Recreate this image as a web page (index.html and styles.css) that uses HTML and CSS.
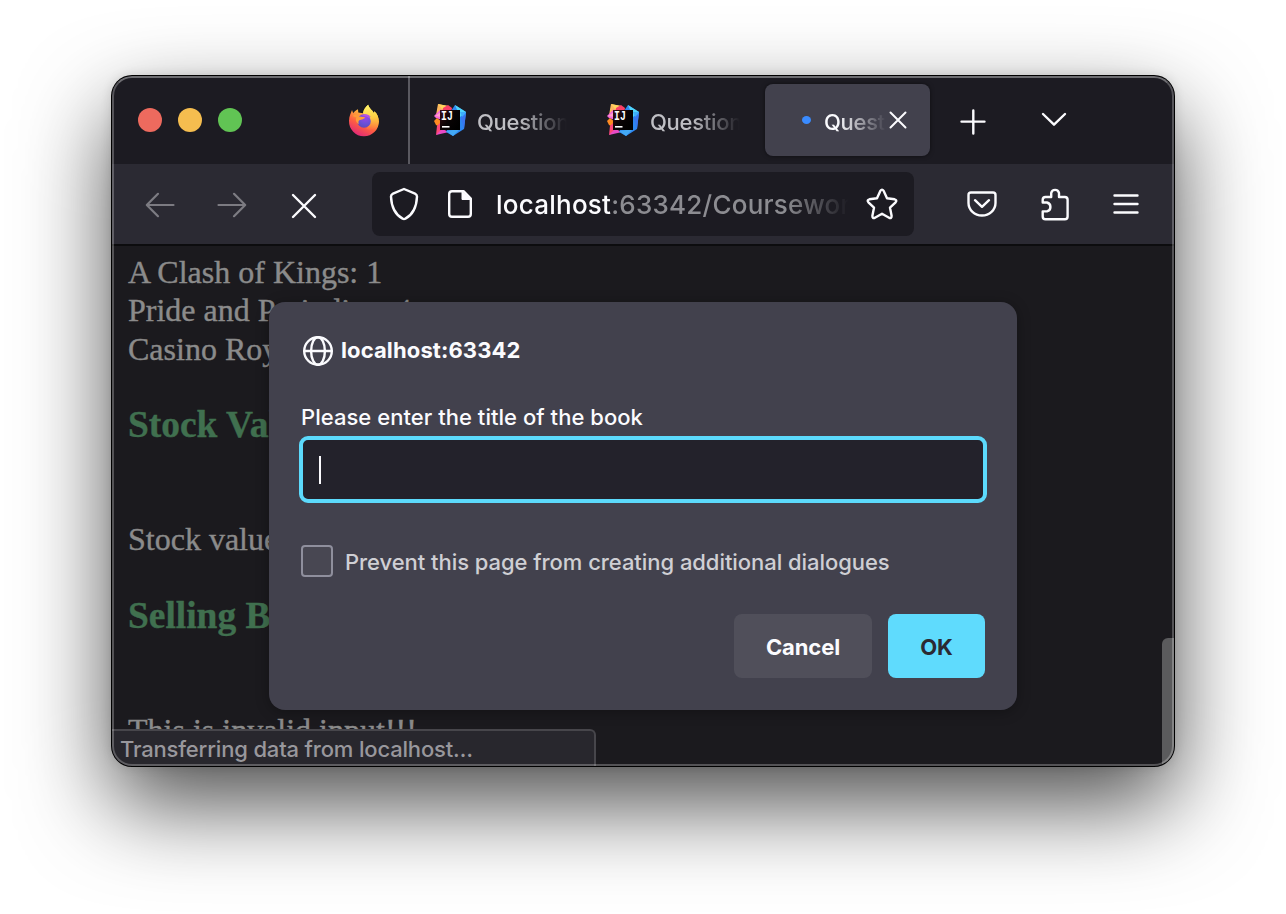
FILE: index.html
```html
<!DOCTYPE html>
<html lang="en">
<head>
<meta charset="utf-8">
<title>localhost:63342</title>
<link rel="stylesheet" href="styles.css">
</head>
<body>
<svg class="defs" width="0" height="0" aria-hidden="true">
  <defs>
    <linearGradient id="ff-body" x1=".8" y1="0" x2=".3" y2="1">
      <stop offset="0" stop-color="#fff04e"/><stop offset=".35" stop-color="#ffb33c"/><stop offset=".65" stop-color="#ff6040"/><stop offset="1" stop-color="#e0267a"/>
    </linearGradient>
    <linearGradient id="ff-flame" x1=".5" y1="0" x2=".6" y2="1">
      <stop offset="0" stop-color="#fff36a"/><stop offset=".5" stop-color="#ffd044"/><stop offset="1" stop-color="#ff8a3a" stop-opacity=".2"/>
    </linearGradient>
    <radialGradient id="ff-globe" cx=".6" cy=".2" r=".9">
      <stop offset="0" stop-color="#a044e8"/><stop offset=".55" stop-color="#6a50d8"/><stop offset="1" stop-color="#5b4ab4"/>
    </radialGradient>
    <linearGradient id="ij-black" x1="0" y1="0" x2="1" y2=".7">
      <stop offset="0" stop-color="#3a0d14"/><stop offset=".55" stop-color="#080304"/><stop offset="1" stop-color="#000"/>
    </linearGradient>
    <symbol id="ij" viewBox="0 0 32 32">
      <path d="M4 0L14 2 12 12 2 11Z" fill="#fdb75c"/>
      <path d="M4 0L14 2 9 6Z" fill="#ffd45e"/>
      <path d="M9 4L14 1 18 4 17 9 8 9Z" fill="#fb3f66"/>
      <path d="M0 12L7 5 8 16 2 14Z" fill="#f565dc"/>
      <path d="M1 12L7 8 7 13Z" fill="#ffa0c8"/>
      <path d="M0 17L3 14 8 18 6 23 2 21Z" fill="#ff8b22"/>
      <path d="M3 22L7 18 12 26 2 31Z" fill="#fd4778"/>
      <path d="M2 31L8 25 15 28Z" fill="#e84ac6"/>
      <path d="M17 7L21 1 32 8 30 25 19 32 12 28 15 23Z" fill="#2d86f0"/>
      <path d="M21 1L32 8 26 13Z" fill="#50d6fb"/>
      <path d="M26 8L32 8 30 17Z" fill="#3daefb"/>
      <path d="M27 14L32 9 30 25Z" fill="#3976ef"/>
      <path d="M12 27L26 25 19 32Z" fill="#43a9f5"/>
      <rect x="6" y="6" width="20" height="20" fill="url(#ij-black)"/>
      <text transform="translate(7 16.4) scale(.82 1)" class="ij-text">IJ</text>
      <rect x="8" y="22" width="7.5" height="1.6" fill="#fff"/>
    </symbol>
  </defs>
</svg>

<main class="window">
  <header class="tabstrip">
    <div class="lights"><i class="light red"></i><i class="light amber"></i><i class="light green"></i></div>
    <svg class="firefox" viewBox="0 0 32 33">
      <path d="M1 17C1 12 3 9 4 6L5.2 9.2C6.2 7.5 8 6 10 5.2L10.3 8.4 15 9.3C15.5 6 17.5 3 20.2.8C21 4.5 24 5.6 26 9.2L26.4 7.2C29.5 10 31 13.5 31 17.5A15 15 0 0 1 1 17Z" fill="url(#ff-body)"/>
      <path d="M15 9.3C15.5 6 17.5 3 20.2.8C21 4.5 24 5.6 26 9.2L26.4 7.2C29.5 10 31 14 30.3 19C28 25 23 27 18 25C23 21 22 13 15 9.3Z" fill="url(#ff-flame)"/>
      <circle cx="16" cy="17" r="6.8" fill="url(#ff-globe)"/>
      <path d="M4.5 12C8 9.5 10 10.2 11 12.4L17 13.2C16.6 15.2 13.5 15.2 11.3 16.3C10.2 17.2 10.4 18.5 10.8 20.2C7.5 18.2 7.3 14.6 8.6 13.4Z" fill="#ff9c38"/>
      <path d="M14 11.5C17 9.2 21 10.5 23 13.2L20.5 12.4 22 15C19.8 12.7 17.5 12 14 11.5Z" fill="#b653e6"/>
    </svg>
    <div class="divider"></div>
    <div class="tab"><svg class="ij"><use href="#ij"/></svg><span class="label">Question</span></div>
    <div class="tab"><svg class="ij"><use href="#ij"/></svg><span class="label">Question</span></div>
    <div class="tab active">
      <i class="busy"></i><span class="label">Questi</span>
      <svg class="close" viewBox="0 0 18 18"><path d="M1.5 1.5L16.5 16.5M16.5 1.5L1.5 16.5"/></svg>
    </div>
    <svg class="plus" viewBox="0 0 26 26"><path d="M13.3 1.5V24.5M1.5 12.6H24.5"/></svg>
    <svg class="chevron" viewBox="0 0 26 15"><path d="M2 2L13 12.7 24 2"/></svg>
  </header>

  <nav class="toolbar">
    <svg class="arrow" viewBox="0 0 30 26"><path d="M28.5 13H2M13 1.8L1.8 13 13 24.2"/></svg>
    <svg class="arrow forward" viewBox="0 0 30 26"><path d="M1.5 13H28M17 1.8L28.2 13 17 24.2"/></svg>
    <svg class="stop" viewBox="0 0 26 26"><path d="M2 2L24 24M24 2L2 24"/></svg>
    <div class="urlbar">
      <svg class="shield" viewBox="0 0 30 34"><path d="M15 2L26 6.6Q28 7.5 28 9.6C27.6 19 24 27.5 16.4 31.6Q15 32.3 13.6 31.6C6 27.5 2.4 19 2 9.6Q2 7.5 4 6.6Z"/></svg>
      <svg class="page-icon" viewBox="0 0 26 30"><path d="M5 2.2H16.5L23.8 9.5V25Q23.8 27.8 21 27.8H5Q2.2 27.8 2.2 25V5Q2.2 2.2 5 2.2Z"/><path class="fold" d="M15 2V10.5H24.5Z"/></svg>
      <span class="url"><b>localhost</b>:63342/Coursework</span>
      <svg class="star" viewBox="0 0 32 32"><path d="M14.3 2.9Q16 .4 17.7 2.9L21 10.3 28.6 11.3Q31.4 12 29.6 14.3L24 19.7 25.6 27.8Q25.8 30.7 23.1 29.8L16 25.8 8.9 29.8Q6.2 30.7 6.4 27.8L8 19.7 2.4 14.3Q.6 12 3.4 11.3L11 10.3Z"/></svg>
    </div>
    <svg class="pocket" viewBox="0 0 30 26"><path d="M4 1.5H26Q28.5 1.5 28.5 4V12A13.5 12.5 0 0 1 1.5 12V4Q1.5 1.5 4 1.5ZM8 9.2L15 15.8 22 9.2"/></svg>
    <svg class="puzzle" viewBox="0 0 28 34"><path d="M4.5 10H10.2V6A4 4 0 0 1 18 6V10H23.8Q26.6 10 26.6 12.8V29.5Q26.6 32.3 23.8 32.3H4.5Q1.7 32.3 1.7 29.5V24.4H6A4.6 4.6 0 0 0 6 15.5H1.7V12.8Q1.7 10 4.5 10Z"/></svg>
    <svg class="menu" viewBox="0 0 26 20"><path d="M1.5 1.5H24.5M1.5 10H24.5M1.5 18.5H24.5"/></svg>
  </nav>

  <section class="content">
    <div class="document">
      <p>A Clash of Kings: 1</p>
      <p>Pride and Prejudice: 4</p>
      <p>Casino Royale: 2</p>
      <h3>Stock Value</h3>
      <p class="after-heading">Stock value</p>
      <h3>Selling Books</h3>
      <p class="after-heading">This is invalid input!!!</p>
    </div>
    <div class="scrollbar"></div>
    <div class="status">Transferring data from localhost…</div>

    <form class="dialog">
      <div class="origin">
        <svg class="globe" viewBox="0 0 32 32"><circle cx="16" cy="16" r="13.8"/><ellipse cx="16" cy="16" rx="6.9" ry="13.8"/><path d="M2.5 16H29.5"/></svg>
        <strong>localhost:63342</strong>
      </div>
      <label class="prompt">Please enter the title of the book</label>
      <div class="field"><i class="caret"></i></div>
      <div class="prevent"><i class="checkbox"></i><span>Prevent this page from creating additional dialogues</span></div>
      <div class="actions">
        <button type="button" class="cancel">Cancel</button>
        <button type="button" class="ok">OK</button>
      </div>
    </form>
  </section>
</main>
</body>
</html>
```
FILE: styles.css
```css
* { box-sizing: border-box; }

body {
  margin: 0;
  height: 914px;
  padding: 76px 112px 0;
  background: #fff;
  font-family: Inter, "Liberation Sans", sans-serif;
  overflow: hidden;
}

svg { display: block; flex: none; fill: none; stroke: #fbfbfe; stroke-width: 2.4; stroke-linecap: round; stroke-linejoin: round; }
.defs { position: absolute; }
.firefox, .ij { stroke: none; }
i { display: block; flex: none; }

.window {
  position: relative;
  width: 1062px;
  height: 690px;
  border-radius: 20px;
  overflow: hidden;
  background: #1c1b22;
  box-shadow: 0 0 0 1px #000, 0 38px 90px rgba(0, 0, 0, .7), 0 0 12px rgba(0, 0, 0, .14);
}
.window::after {
  content: "";
  position: absolute;
  inset: 0;
  border: 2px solid rgba(255, 255, 255, .25);
  border-top-color: rgba(255, 255, 255, .36);
  border-radius: 20px;
  pointer-events: none;
}

/* Tab strip */
.tabstrip { display: flex; align-items: center; height: 88px; padding-left: 26px; background: #1c1b22; }
.lights { display: flex; gap: 16px; }
.light { width: 24px; height: 24px; border-radius: 50%; }
.red { background: #ed6a5e; }
.amber { background: #f5bd4f; }
.green { background: #61c454; }
.firefox { width: 32px; height: 33px; margin-left: 106px; }
.divider { width: 2px; height: 88px; margin-left: 28px; background: #5a5960; }

.tab { display: flex; align-items: center; width: 173px; height: 72px; padding-left: 24px; font-size: 22px; font-weight: 500; color: #bfbfc4; }
.ij { width: 32px; height: 32px; margin-right: 11px; }
.ij-text { font: bold 12px "Liberation Mono", monospace; fill: #fff; }
.label {
  width: 90px;
  padding-top: 3px;
  overflow: hidden;
  white-space: nowrap;
  letter-spacing: -.3px;
  -webkit-mask-image: linear-gradient(to left, transparent, #000 48px);
  mask-image: linear-gradient(to left, transparent, #000 48px);
}
.tab.active { width: 165px; margin-left: 9px; padding-left: 37px; background: #42414d; border-radius: 8px; color: #fbfbfe; box-shadow: 0 0 4px rgba(0, 0, 0, .5); }
.tab.active .label { width: 62px; }
.busy { width: 9px; height: 8px; margin-right: 13px; border-radius: 50%; background: #3a8bff; }
.close { width: 18px; height: 18px; margin-left: 3px; stroke-width: 2; }
.plus { width: 26px; height: 26px; margin: 3px 0 0 30px; }
.chevron { width: 26px; height: 15px; margin: -1px 0 0 55px; }

/* Navigation toolbar */
.toolbar { display: flex; align-items: center; height: 82px; padding-left: 33px; background: #2b2a33; border-bottom: 2px solid #0c0c0e; }
.arrow { width: 30px; height: 26px; margin-top: 2px; stroke: #7c7b82; stroke-width: 2.2; }
.forward { margin-left: 42px; }
.stop { width: 26px; height: 26px; margin: 4px 0 0 44px; }
.urlbar { display: flex; align-items: center; width: 542px; height: 64px; margin-left: 55px; padding-left: 17px; background: #1c1b22; border-radius: 8px; }
.shield { width: 30px; height: 34px; }
.page-icon { width: 26px; height: 30px; margin-left: 28px; }
.page-icon .fold { fill: #fbfbfe; stroke-width: 1; }
.url {
  width: 353px;
  margin-left: 23px;
  padding-top: 1px;
  overflow: hidden;
  white-space: nowrap;
  font-size: 26px;
  color: #8c8c91;
  -webkit-mask-image: linear-gradient(to left, transparent, #000 64px);
  mask-image: linear-gradient(to left, transparent, #000 64px);
}
.url, .url b { font-weight: 500; letter-spacing: .24px; }
.url b { color: #fbfbfe; }
.star { width: 32px; height: 32px; margin-left: 17px; }
.pocket { width: 30px; height: 26px; margin-left: 53px; }
.puzzle { width: 28px; height: 34px; margin-left: 44px; }
.menu { width: 26px; height: 20px; margin: -1px 0 0 44px; }

/* Web page */
.content { position: relative; height: 520px; background: #1b1a1e; overflow: hidden; }
.document { padding: 7px 16px; font: 32px/38.5px "Liberation Serif", serif; color: #8b8b8b; -webkit-text-stroke: .4px #8b8b8b; }
.document p { margin: 0; }
.document p:nth-child(2) { margin-top: -1px; margin-bottom: 1px; }
.document h3 { margin: 35px 0 0; font-size: 37.44px; line-height: 42px; color: #40704f; -webkit-text-stroke-color: #40704f; }
.document .after-heading { margin-top: 74px; }
.document .after-heading + h3 { margin-top: 37px; }
.document .after-heading:last-child { margin-top: 74px; }
.scrollbar { position: absolute; right: 0; bottom: 0; width: 12px; height: 128px; border-radius: 6px 0 0 0; background: #5b5b5d; }
.status {
  position: absolute;
  left: 0;
  bottom: 0;
  width: 484px;
  height: 37px;
  padding: 5px 8px;
  background: #28272d;
  border: solid #47464b;
  border-width: 2px 2px 0 0;
  border-radius: 0 6px 0 0;
  font-size: 22px;
  font-weight: 500;
  letter-spacing: -.17px;
  line-height: 27px;
  color: #98979c;
  white-space: nowrap;
}

/* Prompt dialog */
.dialog {
  position: absolute;
  left: 157px;
  top: 56px;
  width: 748px;
  height: 408px;
  padding: 32px 30px;
  background: #42414d;
  border-radius: 16px;
  box-shadow: 0 2px 14px rgba(0, 0, 0, .3);
  color: #fbfbfe;
  font-size: 22px;
  font-weight: 500;
  letter-spacing: .04px;
  line-height: 28px;
  white-space: nowrap;
}
.origin { display: flex; align-items: center; gap: 7px; height: 34px; padding-left: 3px; }
.origin strong { margin-top: -2px; font-weight: 700; letter-spacing: .12px; }
.globe { width: 32px; height: 32px; }
.prompt { display: block; margin: 35px 0 5px 2px; }
.field { display: flex; align-items: center; height: 67px; padding-left: 16px; background: #23222b; border: 4px solid #5cdafc; border-radius: 9px; }
.caret { width: 2px; height: 28px; background: #fbfbfe; }
.prevent { display: flex; align-items: center; gap: 12px; margin: 42px 0 0 2px; height: 32px; color: #cfcfd4; letter-spacing: -.05px; }
.prevent span { padding-top: 2px; }
.checkbox { width: 32px; height: 32px; border: 2px solid #8f8f9d; border-radius: 4px; background: #484752; }
.actions { display: flex; justify-content: flex-end; gap: 16px; margin: 37px 2px 0 0; }
button { height: 64px; padding: 2px 0 0; border: 0; border-radius: 8px; font: 700 22px Inter, sans-serif; letter-spacing: -.1px; }
.cancel { width: 138px; background: #504f5a; color: #fbfbfe; }
.ok { width: 97px; background: #5fdbfd; color: #2b2a33; }
```
